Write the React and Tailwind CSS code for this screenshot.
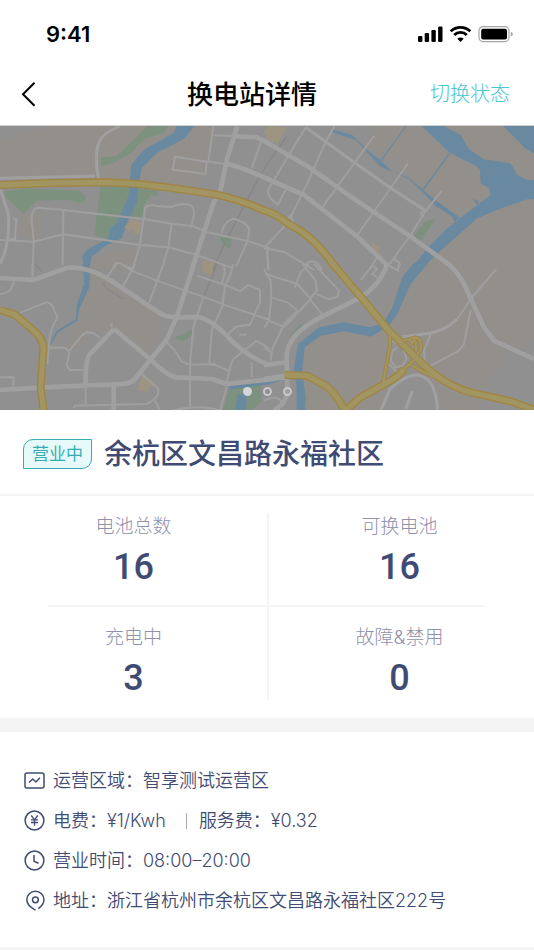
import React from 'react';

// The map is drawn as four tiles, each with its own origin
const tiles = [
  {
    id: 'north-west',
    origin: 'translate(0 -18)',
    land: [
      'M0 60L150 18H640L620 160L560 215L430 195L0 180Z',
      'M60 280L125 280L120 360L50 350Z',
      'M270 450L275 410L420 375L400 450Z',
    ],
    parks: [
      'M440 18H505L490 40L430 58L395 98L340 130L303 138V112L350 108L400 60Z',
      'M12 215L75 205L240 212L261 235L245 249L205 240L110 242L72 281L20 235Z',
      'M302 190L392 200L385 235L350 310L325 356L283 345Z',
      'M415 205L474 212V228L450 225L432 256L428 292L388 290L410 240Z',
      'M657 352L696 356L690 385L672 378Z',
    ],
    water: [
      'M530 18H583L555 55L470 100L425 145L415 200L410 250L385 300L365 355L320 375L275 410L268 446H252L247 410L260 390L325 355L330 325L350 310L385 230L390 180L393 135L430 90L520 40Z',
    ],
    blocks: ['M395 298L424 305L420 343L400 338L398 325L388 336L373 322Z', 'M612 420L645 430L638 450H606Z', 'M800 18L810 55L792 40Z'],
    wide: ['M712 18L680 120L662 210L640 250L575 450', 'M680 130L740 150L810 180', 'M695 48L770 52L810 72'],
    medium: ['M360 18Q310 40 300 60Q285 90 291 150L296 180', 'M0 175L285 168', 'M0 205L18 260Q30 280 24 350Q18 400 0 430'],
    narrow: [
      'M640 46L695 48',
      'M640 18L625 125L680 132',
      'M525 110L620 125L617 162L518 149Z',
      'M785 60L755 145',
      'M98 450L101 362L95 300Q95 265 115 263L190 270L430 297L515 311L580 319L620 336L740 362L810 385',
      'M190 270L188 435',
      'M0 360L101 365L190 343L420 375L505 382L590 405L700 445',
      'M432 297L434 265Q445 252 470 258L515 261Q550 245 575 258Q588 268 575 315',
      'M430 297L420 375L398 448',
      'M515 311L505 382L485 450',
      'M40 296H49L45 357H30',
      'M665 340Q670 305 700 296Q755 310 746 340L743 362L708 440',
      'M340 440Q350 420 370 435L400 448',
      'M800 385L806 450',
    ],
    rails: ['M860 50L810 120L770 185L700 320L650 420L640 450'],
    highways: ['M0 195L150 189L320 187Q410 189 500 202L640 222Q720 238 794 272'],
    ramps: [],
  },
  {
    id: 'north-east',
    origin: 'translate(792 -18)',
    land: ['M330 18H812V450H450L560 340L500 230L380 120L300 80Z'],
    parks: ['M447 350L485 302L513 298L470 364L450 360Z'],
    water: [
      'M473 18H540L590 45L615 88L660 118L740 130L760 165L790 180H812V238H790L720 262L640 295L560 365L500 420L470 455H434L490 385L550 325L640 255L680 225L675 205L650 190L648 150L640 140L555 97Z',
      'M718 18H812V102L780 82Z',
      'M205 28L265 45L310 90L350 122L385 155L350 140L320 108L275 60L208 38Z',
      'M385 155L432 172L475 208L520 245L587 292L572 306L565 290L515 258L475 215L435 178Z',
      'M424 18L348 123L352 124L428 18Z',
      'M556 97L476 208L480 210L560 98Z',
      'M625 235L645 245L640 255Z',
    ],
    blocks: ['M15 18L68 22L42 72L5 58Z', 'M325 370L350 380L345 395L357 408L318 386Z'],
    wide: ['M0 62L140 145L260 230L440 350L560 437', 'M0 172L120 225L280 350L372 438'],
    medium: ['M125 22L185 65L272 128L380 204L485 272'],
    narrow: [
      'M125 22L30 180L12 210Q10 235 42 253L65 210',
      'M212 18L185 65L130 190L78 295',
      'M330 48L272 128L175 262',
      'M432 130L380 204L278 348',
      'M533 212L480 280L440 345L365 448',
      'M485 272Q460 275 480 290',
      'M70 310L0 385',
      'M60 310L80 285L92 320Z',
      'M0 385L60 395L150 450',
      'M10 385L12 450',
      'M125 435Q140 415 160 430L175 450',
      'M340 410L315 450',
      'M388 415L408 432L400 450',
    ],
    rails: [],
    highways: ['M0 271Q40 282 70 310Q120 335 150 365Q185 400 210 437'],
    ramps: [],
  },
  {
    id: 'south-west',
    origin: 'translate(0 414)',
    land: ['M268 5L310 30L480 150L485 200L445 280L342 195L270 200L240 255L195 250L210 210L235 165L245 110Z'],
    parks: [
      'M527 218L545 214L579 195L578 212L552 230L527 226Z',
      'M688 375L785 362V410L755 440H668L680 400Z',
    ],
    water: [
      'M250 0H270L268 70L238 135L232 170L175 205L150 245L148 243L170 200L228 165L230 125L252 60Z',
      'M686 366L810 349L852 340L850 348L810 360L688 377Z',
      'M712 390H742L736 440H706Z',
    ],
    blocks: ['M615 0H645L635 34L610 25Z', 'M427 332L465 352L460 368L447 370L445 385L413 378L420 352Z'],
    wide: [
      'M0 42L100 48L200 12Q260 5 330 48L480 148Q500 160 530 160L595 159Q630 165 680 215Q740 280 810 303',
      'M582 0L530 160L498 230L453 285L405 345Q390 360 365 360L130 370L0 378',
      'M342 195L450 285Q500 335 530 340L635 345L680 360L810 346L855 340',
      'M342 195L270 270Q255 290 257 365',
      'M341 365V440',
    ],
    medium: [],
    narrow: [
      'M98 45L97 0',
      'M0 90Q30 90 40 60V50',
      'M60 146L140 115Q160 120 163 140L172 162Q150 190 146 250L142 300',
      'M148 251H195L208 265L200 305L210 318H248',
      'M208 260L245 215Q270 192 300 222',
      'M0 340H40V368',
      'M350 0L320 40', 'M405 0L370 65', 'M490 0L448 115',
      'M365 0L395 20L470 50L600 95L680 125L810 168',
      'M590 35L680 65L720 82L745 63L780 78V115L750 182L708 188L685 210',
      'M610 100L580 190L570 300V435',
      'M670 120L635 200L628 300',
      'M500 235L525 260L545 292L570 302L640 300L685 320',
      'M680 360L690 310L700 285L770 230L810 255',
      'M755 295V340',
      'M718 212H740',
      'M257 370V420', 'M220 432L225 425L340 422L440 420Q480 400 475 375L425 330',
      'M465 410L480 440', 'M515 440Q600 420 660 440L680 370',
      'M700 0L690 35L675 65L668 120', 'M670 0L675 25L665 60', 'M335 190V178',
    ],
    rails: ['M650 0L612 98', 'M310 55L320 75L370 105', 'M105 0L125 22'],
    highways: ['M0 138L45 152L95 195Q130 222 130 255L122 370L131 441'],
    ramps: [],
  },
  {
    id: 'south-east',
    origin: 'translate(792 414)',
    land: [
      'M440 0H812V230L740 260L690 320L640 441H520L500 350L450 335L380 370L345 441H130L110 420L95 300L170 200L320 190Z',
    ],
    parks: ['M108 181L119 192L75 238L77 220Z'],
    water: [
      'M493 -4L440 60L400 150L375 185L320 218L240 202L170 215L122 250L115 320L125 400L122 441H98V370L90 310L102 240L165 190L240 175L318 190L360 175L385 130L415 40L450 -4Z',
    ],
    blocks: [],
    wide: [
      'M370 0Q350 60 290 100L180 155Q100 195 80 235Q65 260 68 295L70 385Q65 420 30 440',
      'M540 -10Q580 20 600 60L660 190L690 230L810 285',
      'M0 303L68 295', 'M0 345L68 335',
    ],
    medium: ['M580 165Q540 205 480 210L415 218', 'M350 440L378 375Q420 335 458 332Q500 340 510 380Q520 400 520 440', 'M445 380L425 435'],
    narrow: [
      'M697 15L620 105L580 165',
      'M0 15L20 50L22 100L15 170L60 190L140 105L100 60L5 30', 'M22 100L70 115L100 140L60 180L25 255L20 290',
      'M115 0L155 50L158 80L137 105L178 155', 'M150 0L225 80L220 100L195 106L158 90', 'M135 0L110 25L92 70',
      'M15 170L0 190', 'M20 265L0 250', 'M290 48L325 5L340 15L325 30L340 40', 'M405 0L402 20L375 5',
      'M620 138L600 240L585 260L500 305', 'M500 210L480 260L482 290',
      'M375 225L415 248L428 285L415 305L395 310L380 290L385 262L400 248', 'M375 300L400 325',
      'M0 410Q30 395 45 405L65 420',
    ],
    rails: ['M380 0L345 45'],
    highways: ['M205 -2L300 110L370 195L460 285Q500 325 540 350Q580 375 620 385L740 412L820 441', 'M62 333L130 335L190 368Q220 395 243 440', 'M243 440L290 400L370 355Q405 338 420 315'],
    ramps: ['M378 205L377 250L357 358', 'M418 230L455 220Q475 225 470 255Q455 290 420 315', 'M435 225L445 240L450 225Q462 245 455 260', 'M445 305L490 330L540 350'],
  },
];

const mapLayers = [
  { key: 'land', fill: '#93908c' },
  { key: 'parks', fill: '#7d917f' },
  { key: 'water', fill: '#6989a1' },
  { key: 'blocks', fill: '#9d9582' },
  { key: 'rails', stroke: '#868687', width: 4 },
  { key: 'narrow', stroke: '#9f9f9f', width: 6 },
  { key: 'medium', stroke: '#a0a0a0', width: 9 },
  { key: 'wide', stroke: '#a0a0a0', width: 14 },
  { key: 'ramps', stroke: '#a08441', width: 12 },
  { key: 'highways', stroke: '#a08441', width: 24 },
  { key: 'ramps', stroke: '#a19561', width: 7 },
  { key: 'highways', stroke: '#a19561', width: 16 },
];

const StationMap = () => (
  <svg viewBox="0 0 1602 852" preserveAspectRatio="xMidYMid slice" className="block w-full bg-[#909091]" aria-hidden="true">
    {mapLayers.map((layer, i) => (
      <g
        key={i}
        fill={layer.fill || 'none'}
        stroke={layer.stroke}
        strokeWidth={layer.width}
        strokeLinejoin="round"
      >
        {tiles.map((tile) => (
          <g key={tile.id} transform={tile.origin}>
            {tile[layer.key].map((d) => (
              <path key={d} d={d} />
            ))}
          </g>
        ))}
      </g>
    ))}
  </svg>
);

const StatusBar = () => (
  <div className="flex h-[62px] items-center justify-between pt-[5px] pr-5 pl-[46px]">
    <span className="font-['Inter'] text-[22px] leading-6 font-semibold">9:41</span>
    <svg width="96" height="18" viewBox="0 0 96 18" aria-hidden="true">
      <rect x="0" y="11" width="4.4" height="6" rx="1.2" />
      <rect x="6.7" y="8" width="4.4" height="9" rx="1.2" />
      <rect x="13.4" y="5" width="4.4" height="12" rx="1.2" />
      <rect x="20.1" y="1.5" width="4.4" height="15.5" rx="1.2" />
      <g fill="none" stroke="#000" strokeWidth="2.8">
        <path d="M32.7 6.3a14 14 0 0 1 19.6 0" />
        <path d="M36.2 10a9 9 0 0 1 12.6 0" />
      </g>
      <path d="M42.5 17l-3.2-3.3a4.6 4.6 0 0 1 6.4 0z" />
      <rect x="61" y="1.6" width="30" height="15" rx="4" fill="#fff" stroke="#a5a5a5" strokeWidth="1.2" />
      <rect x="63.2" y="3.8" width="25.8" height="10.6" rx="2" />
      <path d="M92.8 6.8q2 1 2 2.4t-2 2.4z" fill="#a5a5a5" />
    </svg>
  </div>
);

const NavBar = () => (
  <header className="grid h-16 grid-cols-[1fr_auto_1fr] items-center border-b border-[#cfcfcf] px-5">
    <button type="button" aria-label="返回" className="justify-self-start">
      <svg width="18" height="26" viewBox="0 0 18 26" fill="none" stroke="#000" strokeWidth="2">
        <path d="M14.5 1.8L3 13.3l11.500 11.500" />
      </svg>
    </button>
    <h1 className="pt-[2px] pr-[30px] text-[26px] leading-8 font-medium">换电站详情</h1>
    <button type="button" className="mr-1 justify-self-end text-xl leading-8 font-light text-[#4ac6d0]">
      切换状态
    </button>
  </header>
);

const Stat = ({ label, value }) => (
  <div className="flex flex-col items-center gap-1">
    <dt className="text-[19px] leading-7 font-light text-[#8f91ad]">{label}</dt>
    <dd className="font-['Roboto'] text-4xl leading-[44px] font-medium text-[#3f4b73]">{value}</dd>
  </div>
);

const AreaIcon = () => (
  <>
    <rect x="1" y="3" width="19" height="15" rx="2" />
    <path d="M5 12.500l3.700-3.500 3.200 3 4-4.300" />
  </>
);

const PriceIcon = () => (
  <>
    <circle cx="10.500" cy="10.500" r="9.400" />
    <path strokeWidth="1.3" d="M7.300 5.500l3.200 4.300 3.200-4.300M10.500 9.800v6M7 9.900h7M7 12.500h7" />
  </>
);

const ClockIcon = () => (
  <>
    <circle cx="10.500" cy="10.500" r="9.400" />
    <path d="M10 5v6.200l4.500 2" />
  </>
);

const PinIcon = () => (
  <>
    <path d="M11.500 20.200C6 17.300 2.800 13.500 2.800 9.800a8.600 8.600 0 0 1 17.200 0c0 3.200-2.200 6.200-5.600 8.800" />
    <circle cx="11.400" cy="9.800" r="2.900" />
  </>
);

const InfoRow = ({ icon, children }) => (
  <li className="flex items-center gap-[7px]">
    <svg width="22" height="22" viewBox="0 0 22 22" fill="none" stroke="#3f4b73" strokeWidth="1.5" aria-hidden="true" className="shrink-0">
      {icon}
    </svg>
    <p className="flex items-center">{children}</p>
  </li>
);

const App = () => {
  return (
    <div className="min-h-screen bg-white font-['Inter','Noto_Sans_CJK_SC',sans-serif] text-black">
      <StatusBar />
      <NavBar />

      {/* Map carousel */}
      <div className="relative">
        <StationMap />
        <div className="absolute inset-x-0 bottom-[14px] flex justify-center gap-[11px]">
          <button type="button" aria-label="1" className="size-[9px] rounded-full bg-[#d5d5db]" />
          <button type="button" aria-label="2" className="size-[9px] rounded-full border-2 border-[#c8c8cd]" />
          <button type="button" aria-label="3" className="size-[9px] rounded-full border-2 border-[#c8c8cd]" />
        </div>
      </div>

      {/* Station name */}
      <div className="flex h-[86px] items-center gap-3 border-b-2 border-[#f4f4f4] px-[23px] pt-1">
        <span className="rounded-tl-[10px] rounded-br-[10px] border border-[#35adb4] bg-[#e5faf9] px-2 text-[17px] leading-7 text-[#35adb4]">
          营业中
        </span>
        <h2 className="text-[28px] leading-10 font-medium text-[#3f4b73]">余杭区文昌路永福社区</h2>
      </div>

      {/* Battery stats */}
      <dl className="border-b-[14px] border-[#f4f4f4] pt-[17px] pb-[18px]">
        <div className="grid grid-cols-2">
          <div className="pb-4">
            <Stat label="电池总数" value="16" />
          </div>
          <div className="border-l-2 border-[#f4f4f4] pr-1 pb-4">
            <Stat label="可换电池" value="16" />
          </div>
        </div>
        <div className="mx-12 h-[2px] bg-[#f4f4f4]" />
        <div className="grid grid-cols-2">
          <div className="pt-[17px]">
            <Stat label="充电中" value="3" />
          </div>
          <div className="border-l-2 border-[#f4f4f4] pt-[17px] pr-1">
            <Stat label="故障&禁用" value="0" />
          </div>
        </div>
      </dl>

      {/* Station details */}
      <ul className="flex flex-col gap-3 border-b-[3px] border-[#f4f4f4] px-6 pt-[35px] pb-8 text-lg leading-7 font-[350] text-[#3f4b73]">
        <InfoRow icon={<AreaIcon />}>运营区域：智享测试运营区</InfoRow>
        <InfoRow icon={<PriceIcon />}>
          电费：¥1/Kwh
          <span className="mr-3 ml-5 h-4 w-px bg-[#a5a9c0]" />
          服务费：¥0.32
        </InfoRow>
        <InfoRow icon={<ClockIcon />}>营业时间：08:00–20:00</InfoRow>
        <InfoRow icon={<PinIcon />}>地址：浙江省杭州市余杭区文昌路永福社区222号</InfoRow>
      </ul>
    </div>
  );
};

export default App;
